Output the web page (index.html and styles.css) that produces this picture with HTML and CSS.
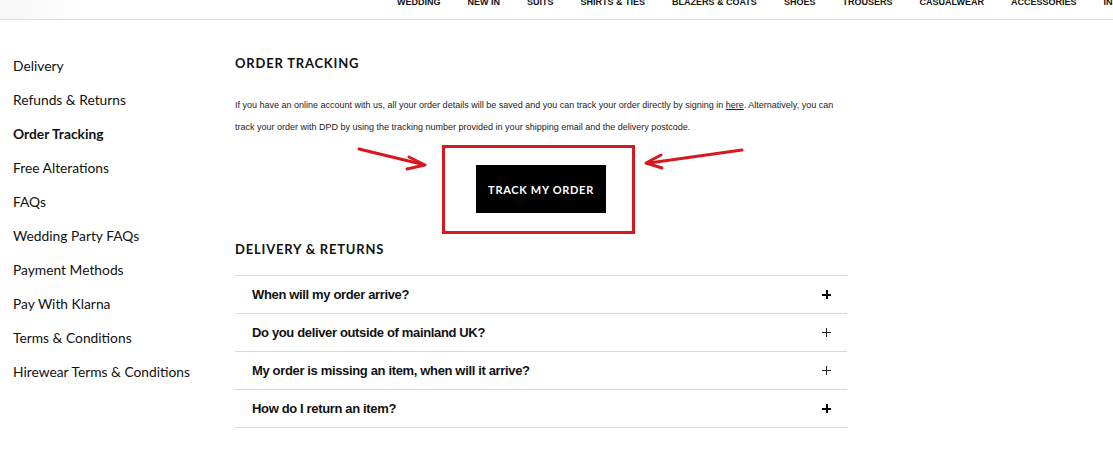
FILE: index.html
```html
<!DOCTYPE html>
<html lang="en">
<head>
<meta charset="utf-8">
<title>Order Tracking</title>
<link rel="stylesheet" href="styles.css">
</head>
<body>
<header class="site-header">
  <div class="logo-shade"></div>
  <nav class="top-nav">
    <a>WEDDING</a><a>NEW IN</a><a>SUITS</a><a>SHIRTS &amp; TIES</a><a>BLAZERS &amp; COATS</a><a>SHOES</a><a>TROUSERS</a><a>CASUALWEAR</a><a>ACCESSORIES</a><a>INSPIRATION</a>
  </nav>
</header>
<div class="page">
  <aside class="side-nav">
    <a>Delivery</a>
    <a>Refunds &amp; Returns</a>
    <a class="active">Order Tracking</a>
    <a>Free Alterations</a>
    <a>FAQs</a>
    <a>Wedding Party FAQs</a>
    <a>Payment Methods</a>
    <a>Pay With Klarna</a>
    <a>Terms &amp; Conditions</a>
    <a>Hirewear Terms &amp; Conditions</a>
  </aside>
  <main class="content">
    <h2 class="section-title">ORDER TRACKING</h2>
    <p class="intro">If you have an online account with us, all your order details will be saved and you can track your order directly by signing in <a class="link">here</a>. Alternatively, you can track your order with DPD by using the tracking number provided in your shipping email and the delivery postcode.</p>
    <div class="track-wrap">
      <button class="track-btn">TRACK MY ORDER</button>
      <span class="highlight-box"></span>
      <svg class="arrow arrow-left" width="80" height="30" viewBox="0 0 80 30">
        <line x1="2" y1="2" x2="64" y2="17" stroke="#d8181f" stroke-width="3" stroke-linecap="round"/>
        <path d="M52 10 L68 18 L50 22" fill="none" stroke="#d8181f" stroke-width="3" stroke-linecap="round" stroke-linejoin="round"/>
      </svg>
      <svg class="arrow arrow-right" width="104" height="24" viewBox="0 0 104 24">
        <line x1="101" y1="3" x2="8" y2="16" stroke="#d8181f" stroke-width="3" stroke-linecap="round"/>
        <path d="M20 8 L5 16 L21 21" fill="none" stroke="#d8181f" stroke-width="3" stroke-linecap="round" stroke-linejoin="round"/>
      </svg>
    </div>
    <h2 class="section-title second">DELIVERY &amp; RETURNS</h2>
    <ul class="faq">
      <li><span>When will my order arrive?</span><i class="plus bold"></i></li>
      <li><span>Do you deliver outside of mainland UK?</span><i class="plus"></i></li>
      <li><span>My order is missing an item, when will it arrive?</span><i class="plus"></i></li>
      <li><span>How do I return an item?</span><i class="plus bold"></i></li>
    </ul>
  </main>
</div>
</body>
</html>
```
FILE: styles.css
```css
html, body {
  margin: 0;
  padding: 0;
  background: #fff;
  overflow: hidden;
}
body {
  font-family: "Lato", "Liberation Sans", sans-serif;
  color: #111;
}
.site-header {
  position: relative;
  height: 19px;
  border-bottom: 1px solid #dcdcdc;
  overflow: hidden;
}
.logo-shade {
  position: absolute;
  left: 0;
  top: 0;
  width: 90px;
  height: 19px;
  background: linear-gradient(90deg, #f2f2f2, #fff);
  opacity: 0.6;
}
.top-nav {
  display: flex;
  gap: 27px;
  padding-left: 397px;
  margin-top: -4px;
  white-space: nowrap;
  font-family: "Liberation Sans", sans-serif;
  font-weight: 700;
  font-size: 9px;
  letter-spacing: 0;
  line-height: 12px;
  color: #111;
}
.page {
  display: flex;
}
.side-nav {
  width: 222px;
  padding: 29px 0 0 13px;
  display: flex;
  flex-direction: column;
}
.side-nav a {
  font-size: 13.8px;
  line-height: 34px;
  color: #111;
}
.side-nav a.active {
  font-weight: 700;
}
.content {
  width: 612px;
}
.section-title {
  margin: 0;
  padding-top: 35px;
  font-size: 13px;
  line-height: 16px;
  font-weight: 700;
  letter-spacing: 0.8px;
  color: #111;
}
.section-title.second {
  padding-top: 0;
  margin-top: 28px;
}
.intro {
  margin: 23px 0 0;
  font-family: "Liberation Sans", sans-serif;
  font-size: 9px;
  line-height: 22px;
  color: #222;
}
.link {
  text-decoration: underline;
}
.track-wrap {
  position: relative;
  display: flex;
  justify-content: center;
  padding: 27px 0 0;
}
.track-btn {
  width: 130px;
  height: 48px;
  border: 0;
  background: #000;
  color: #fff;
  font-family: "Lato", sans-serif;
  font-weight: 700;
  font-size: 11px;
  letter-spacing: 0.7px;
}
.highlight-box {
  position: absolute;
  left: 207px;
  top: 7px;
  width: 187px;
  height: 83px;
  border: 3px solid #d8181f;
}
.arrow {
  position: absolute;
}
.arrow-left {
  left: 122px;
  top: 9px;
}
.arrow-right {
  left: 406px;
  top: 9px;
}
.faq {
  list-style: none;
  margin: 18px 0 0;
  padding: 0;
  border-top: 1px solid #d9d9d9;
}
.faq li {
  display: flex;
  align-items: center;
  justify-content: space-between;
  height: 37px;
  padding: 0 17px;
  border-bottom: 1px solid #d9d9d9;
  font-family: "Liberation Sans", sans-serif;
  font-weight: 700;
  font-size: 13px;
  letter-spacing: -0.35px;
  color: #111;
}
.plus {
  position: relative;
  width: 9px;
  height: 9px;
  margin-right: -1px;
}
.plus::before, .plus::after {
  content: "";
  position: absolute;
  background: #222;
}
.plus::before {
  left: 0;
  top: 4px;
  width: 9px;
  height: 1px;
}
.plus::after {
  left: 4px;
  top: 0;
  width: 1px;
  height: 9px;
}
.plus.bold::before {
  height: 2px;
  background: #000;
}
.plus.bold::after {
  width: 2px;
  background: #000;
}
```
